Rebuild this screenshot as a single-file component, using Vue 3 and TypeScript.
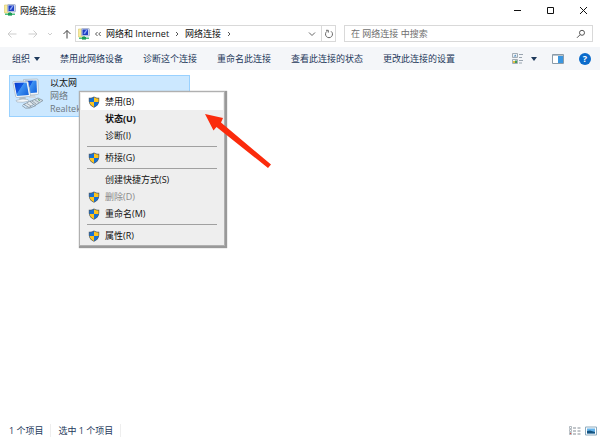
<script setup lang="ts">
import { ref } from 'vue'

interface MenuEntry {
  label: string
  shield?: boolean
  bold?: boolean
  disabled?: boolean
  hot?: boolean
}

const title = '网络连接'
const crumbs: string[] = ['网络和 Internet', '网络连接']
const commands: string[] = ['禁用此网络设备', '诊断这个连接', '重命名此连接', '查看此连接的状态', '更改此连接的设置']
const search = ref('')

const groups: MenuEntry[][] = [
  [
    { label: '禁用(B)', shield: true, hot: true },
    { label: '状态(U)', bold: true },
    { label: '诊断(I)' },
  ],
  [{ label: '桥接(G)', shield: true }],
  [
    { label: '创建快捷方式(S)' },
    { label: '删除(D)', shield: true, disabled: true },
    { label: '重命名(M)', shield: true },
  ],
  [{ label: '属性(R)', shield: true }],
]
</script>

<template>
  <div class="window">
    <svg class="defs" aria-hidden="true">
      <symbol id="net" viewBox="0 0 12 12">
        <path d="M.5 1h4v8h-4z" fill="#f8ec9a" stroke="#d8c76a" stroke-width=".6" />
        <rect x="3.500" y=".5" width="8" height="7.500" rx="1" fill="#c9d3ea" stroke="#8e9cc0" stroke-width=".6" />
        <rect x="4.500" y="1.500" width="5.500" height="5.500" fill="#1f3fc4" />
        <path d="M5.500 5.500L8 2h1.500L7 6z" fill="#8fa8f7" />
        <path d="M1 10.300h10M6 8v2" stroke="#4cc07c" stroke-width="1.600" />
        <rect x="4" y="9" width="4" height="2.600" fill="#1c9a55" />
      </symbol>
      <symbol id="shield" viewBox="0 0 12 12">
        <path d="M6 .4C7.300 1.400 9 1.900 11.200 1.800v3.500C11 8.300 9 10.500 6 11.700 3 10.500 1 8.300.8 5.300V1.800C3 1.900 4.700 1.400 6 .4z" fill="#4d5b68" />
        <path d="M6 1.300v4.700H1.500V2.600C3.400 2.600 4.800 2.200 6 1.300z" fill="#1671d4" />
        <path d="M6 1.300c1.200.9 2.600 1.300 4.500 1.300V6H6z" fill="#ffc51d" />
        <path d="M1.500 6H6v5C3.500 9.900 1.900 8.200 1.500 6z" fill="#ffc51d" />
        <path d="M6 6h4.500C10.100 8.200 8.500 9.900 6 11z" fill="#1671d4" />
      </symbol>
    </svg>

    <header class="titlebar">
      <svg class="net"><use href="#net" /></svg>
      <h1>{{ title }}</h1>
      <div class="controls">
        <button type="button" aria-label="最小化">
          <svg viewBox="0 0 9 9"><path d="M1 4.500h7" /></svg>
        </button>
        <button type="button" aria-label="最大化">
          <svg viewBox="0 0 9 9"><path d="M1.500 1.500h6v6h-6z" /></svg>
        </button>
        <button type="button" aria-label="关闭">
          <svg viewBox="0 0 9 9"><path d="M1 1l7 7M8 1L1 8" /></svg>
        </button>
      </div>
    </header>

    <nav class="address-row">
      <div class="arrows">
        <button type="button" aria-label="后退" disabled>
          <svg class="faint" viewBox="0 0 10 10"><path d="M9.500 5H1M4.500 1.500L1 5l3.500 3.500" /></svg>
        </button>
        <button type="button" aria-label="前进" disabled>
          <svg class="faint" viewBox="0 0 10 10"><path d="M.5 5H9M5.500 1.500L9 5 5.500 8.500" /></svg>
        </button>
        <button type="button" class="recent" aria-label="最近" disabled>
          <svg class="faint" viewBox="0 0 10 10"><path d="M3 4l2 2 2-2" /></svg>
        </button>
        <button type="button" aria-label="向上">
          <svg class="up" viewBox="0 0 10 10"><path d="M5 9.500V1.500M1.500 5L5 1.500 8.500 5" /></svg>
        </button>
      </div>
      <div class="address">
        <svg class="net"><use href="#net" /></svg>
        <svg class="mark" viewBox="0 0 8 8"><path d="M3.500 2L1.500 4l2 2M6.700 2l-2 2 2 2" /></svg>
        <template v-for="crumb in crumbs" :key="crumb">
          <a href="#">{{ crumb }}</a>
          <svg class="mark" viewBox="0 0 8 8"><path d="M3 2l2 2-2 2" /></svg>
        </template>
        <button type="button" class="drop" aria-label="展开">
          <svg viewBox="0 0 10 10"><path d="M2 3.500l3 3 3-3" /></svg>
        </button>
        <button type="button" class="refresh" aria-label="刷新">
          <svg viewBox="0 0 10 10"><path d="M7 2.300A3.500 3.500 0 1 1 3 2.300M2 1.300h2.300v2.300" /></svg>
        </button>
      </div>
      <label class="search">
        <input v-model="search" type="text" placeholder="在 网络连接 中搜索" aria-label="搜索" />
        <svg viewBox="0 0 10 10"><circle cx="6" cy="3.800" r="2.500" /><path d="M4.200 5.600L1 8.800" /></svg>
      </label>
    </nav>

    <div class="toolbar">
      <button type="button" class="organize">组织<i class="caret"></i></button>
      <button v-for="command in commands" :key="command" type="button">{{ command }}</button>
      <div class="views">
        <button type="button" class="view" aria-label="更改视图">
          <svg width="12" height="12" viewBox="0 0 12 12">
            <path d="M.5.500h5v4h-5zM.5 6.500h5v4h-5z" fill="#eef3f7" stroke="#a4adb5" />
            <path d="M1.500 3.500l2-2 1 2z" fill="#5b94c4" />
            <path d="M1 8h2v2H1z" fill="#e3bc43" />
            <path d="M3 7.500h2V10H3z" fill="#3f9b59" />
            <path d="M7 1.500h4M7 4.500h3M7 7.500h4M7 10h3" stroke="#9aa5b0" />
          </svg>
          <i class="caret"></i>
        </button>
        <button type="button" aria-label="预览窗格">
          <svg width="12" height="10" viewBox="0 0 12 10">
            <path d="M.5.500h11v9H.5z" fill="#fff" stroke="#8b9ba8" />
            <path d="M1 1.500h10" stroke="#b8c3cc" />
            <path d="M6 2h5v7H6z" fill="#3a96e0" />
          </svg>
        </button>
        <button type="button" class="help" aria-label="帮助">?</button>
      </div>
    </div>

    <main class="content">
      <article class="connection">
        <svg class="computers" viewBox="0 0 36 36">
          <defs>
            <linearGradient id="screen" x1="0" y1="0" x2="1" y2=".6">
              <stop offset="0" stop-color="#0a3ccb" /><stop offset=".48" stop-color="#1257e2" />
              <stop offset=".52" stop-color="#3f92f2" /><stop offset="1" stop-color="#1c6ce0" />
            </linearGradient>
          </defs>
          <path d="M20 19h5l1 3h-7z" fill="#cdd7df" />
          <path d="M13.500 3.500l13.500-.5q1 0 1 1l.5 13.500q0 1-1 1l-12 1z" fill="#eef3f7" stroke="#a3b3c0" stroke-width=".7" />
          <path d="M15 4.800l11.500-.4.5 12-11 1z" fill="url(#screen)" />
          <path d="M9.500 21h6l.5 3h-7z" fill="#b3c0cb" />
          <path d="M6 24.500q6-2.500 12-1l1 1.500q-6 2-12 1z" fill="#f6f9fb" stroke="#9aaab7" stroke-width=".6" />
          <path d="M3.500 5.500L17 5.300q1 0 1.200 1L20.500 19q0 1.500-1 1.500L7 21.500q-1 0-1.300-1L3 6.500q0-1 .5-1z" fill="#f7fafc" stroke="#a3b3c0" stroke-width=".7" />
          <path d="M4.300 6.700l12.300-.2 2.300 12.400-12 1z" fill="url(#screen)" />
          <path d="M12 29.500q3 4 8 2.500l6-2.500M13 28.500l7-1" fill="none" stroke="#93a1ac" stroke-width="1" />
          <path d="M14 28.500l6-3.500 5 2.500-6 4z" fill="#e4ebf0" stroke="#83929e" stroke-width=".8" />
          <path d="M20 25.500l8-3.500 5 2.500-8 5z" fill="#d3dee6" stroke="#83929e" stroke-width=".8" />
          <path d="M17 27.500l4 2.500M22 25l4 3M25 24l4 2.500" stroke="#7f8e9a" stroke-width=".7" />
          <path d="M28 23.500l2 1" stroke="#5aa86a" />
        </svg>
        <div class="details">
          <strong>以太网</strong>
          <span>网络</span>
          <span>Realtek</span>
        </div>
      </article>
    </main>

    <footer class="status">
      <span>1 个项目</span>
      <span>选中 1 个项目</span>
      <div class="modes">
        <button type="button" aria-label="详细信息">
          <svg width="12" height="10" viewBox="0 0 12 10">
            <path d="M.5.500h2v2h-2zM.5 3.500h2v2h-2zM.5 6.500h2v2h-2z" fill="#fff" stroke="#a0a8b0" stroke-width=".8" />
            <path d="M4 2h3M8.500 2h3M4 5h3M8.500 5h3M4 8h3M8.500 8h3" stroke="#858e96" />
            <path d="M1 7.500h1" stroke="#df4b43" />
          </svg>
        </button>
        <button type="button" aria-label="大图标">
          <svg width="12" height="10" viewBox="0 0 12 10">
            <path d="M.5 1h11v8H.5z" fill="#fff" stroke="#8caabd" />
            <path d="M2 2.500h8v5H2z" fill="#63b3eb" />
            <path d="M2 5l3-.5L10 6v1.500H2z" fill="#15537f" />
          </svg>
        </button>
      </div>
    </footer>

    <div class="menu" role="menu">
      <div v-for="(group, index) in groups" :key="index" class="group">
        <button
          v-for="entry in group"
          :key="entry.label"
          type="button"
          role="menuitem"
          :disabled="entry.disabled"
          :class="{ bold: entry.bold, hot: entry.hot }"
        >
          <span class="slot"><svg v-if="entry.shield"><use href="#shield" /></svg></span>
          {{ entry.label }}
        </button>
      </div>
    </div>

    <svg class="pointer" viewBox="0 0 68 56" aria-hidden="true">
      <path d="M1 1l18 4-2 4.500 50 42-3 3.500L12.500 14 9.500 17.500z" fill="#fb2b0c" />
    </svg>
  </div>
</template>

<style>
body {
  margin: 0;
  background: #fff;
}
</style>

<style scoped>
.window {
  position: relative;
  display: flex;
  flex-direction: column;
  min-height: 100vh;
  box-sizing: border-box;
  font: 9px/13px "Open Sans", "Noto Sans CJK SC", sans-serif;
  color: #111;
  white-space: nowrap;
}
.defs {
  position: absolute;
  width: 0;
  height: 0;
}
button {
  display: flex;
  align-items: center;
  padding: 0;
  border: 0;
  background: none;
  font: inherit;
  color: inherit;
}
svg {
  display: block;
  flex: none;
}
.net {
  width: 12px;
  height: 12px;
}
.titlebar {
  display: flex;
  align-items: center;
  gap: 4px;
  height: 20px;
  padding-left: 4px;
}
h1 {
  margin: 0;
  font: inherit;
}
.controls {
  display: flex;
  margin-left: auto;
}
.controls button {
  justify-content: center;
  width: 33px;
  height: 20px;
}
.controls svg {
  width: 9px;
  height: 9px;
  fill: none;
  stroke: #111;
}
.address-row {
  display: flex;
  align-items: center;
  gap: 8px;
  height: 27px;
  padding: 0 7px;
}
.arrows {
  display: flex;
  align-items: center;
  gap: 11px;
  width: 60px;
}
.arrows svg {
  width: 10px;
  height: 10px;
  fill: none;
  stroke: #454545;
}
.arrows .faint {
  stroke: #cdcdcd;
}
.arrows .recent {
  margin: 0 -4px;
}
.address {
  display: flex;
  flex: 1;
  align-items: center;
  gap: 4px;
  height: 17px;
  box-sizing: border-box;
  padding-left: 2px;
  border: 1px solid #d9d9d9;
}
.address a {
  color: inherit;
  text-decoration: none;
}
.mark {
  width: 8px;
  height: 8px;
  fill: none;
  stroke: #555;
  stroke-width: 1;
}
.drop {
  margin-left: auto;
}
.address button svg {
  width: 10px;
  height: 10px;
  fill: none;
  stroke: #666;
}
.refresh {
  justify-content: center;
  width: 14px;
  height: 15px;
  border-left: 1px solid #d9d9d9;
}
.search {
  display: flex;
  flex: 0 1 249px;
  align-items: center;
  height: 17px;
  box-sizing: border-box;
  padding: 0 6px;
  border: 1px solid #d9d9d9;
}
.search input {
  flex: 1;
  min-width: 0;
  padding: 0;
  border: 0;
  outline: 0;
  background: none;
  font: inherit;
}
.search input::placeholder {
  color: #707070;
  opacity: 1;
}
.search svg {
  width: 10px;
  height: 10px;
  fill: none;
  stroke: #555;
}
.toolbar {
  display: flex;
  align-items: center;
  gap: 20px;
  height: 23px;
  padding: 0 9px 0 12px;
  background: #f4f6f9;
  color: #1e395b;
}
.caret {
  border: 3px solid transparent;
  border-top: 4px solid #1e395b;
  border-bottom: 0;
}
.organize {
  gap: 4px;
}
.views {
  display: flex;
  align-items: center;
  gap: 15px;
  margin-left: auto;
}
.view {
  gap: 7px;
}
.help {
  justify-content: center;
  width: 12px;
  height: 12px;
  border-radius: 50%;
  background: #0b6bcb;
  color: #fff;
  font-weight: 700;
}
.content {
  flex: 1;
  padding: 5px 9px;
}
.connection {
  display: flex;
  gap: 4px;
  width: 181px;
  height: 42px;
  box-sizing: border-box;
  border: 1px solid #99d1ff;
  background: #cce8ff;
}
.computers {
  width: 36px;
  height: 36px;
}
.details {
  display: flex;
  flex-direction: column;
  color: #6d7780;
}
.details strong {
  font-weight: 400;
  color: #111;
}
.status {
  display: flex;
  align-items: center;
  height: 13px;
  padding: 0 3px 0 9px;
  color: #1e395b;
}
.status span {
  padding-right: 7px;
  margin-right: 7px;
  border-right: 1px solid #eee;
}
.modes {
  display: flex;
  gap: 4px;
  margin-left: auto;
}
.menu {
  position: absolute;
  top: 91px;
  left: 79px;
  width: 146px;
  box-sizing: border-box;
  padding: 1px;
  border: 1px solid #b0b0b0;
  background: #eee;
  box-shadow: 1px 1px 1px 1px #999;
}
.group + .group::before {
  content: "";
  display: block;
  height: 1px;
  margin: 2px 6px;
  background: #a0a0a0;
}
.menu button {
  width: 100%;
  height: 17px;
}
.menu .hot {
  background: #fff;
}
.menu .bold {
  font-weight: 700;
}
.menu button:disabled {
  color: #8a8a8a;
}
.slot {
  width: 17px;
  padding-left: 7px;
}
.slot svg {
  width: 12px;
  height: 12px;
}
.pointer {
  position: absolute;
  top: 113px;
  left: 204px;
  width: 68px;
  height: 56px;
}
</style>
